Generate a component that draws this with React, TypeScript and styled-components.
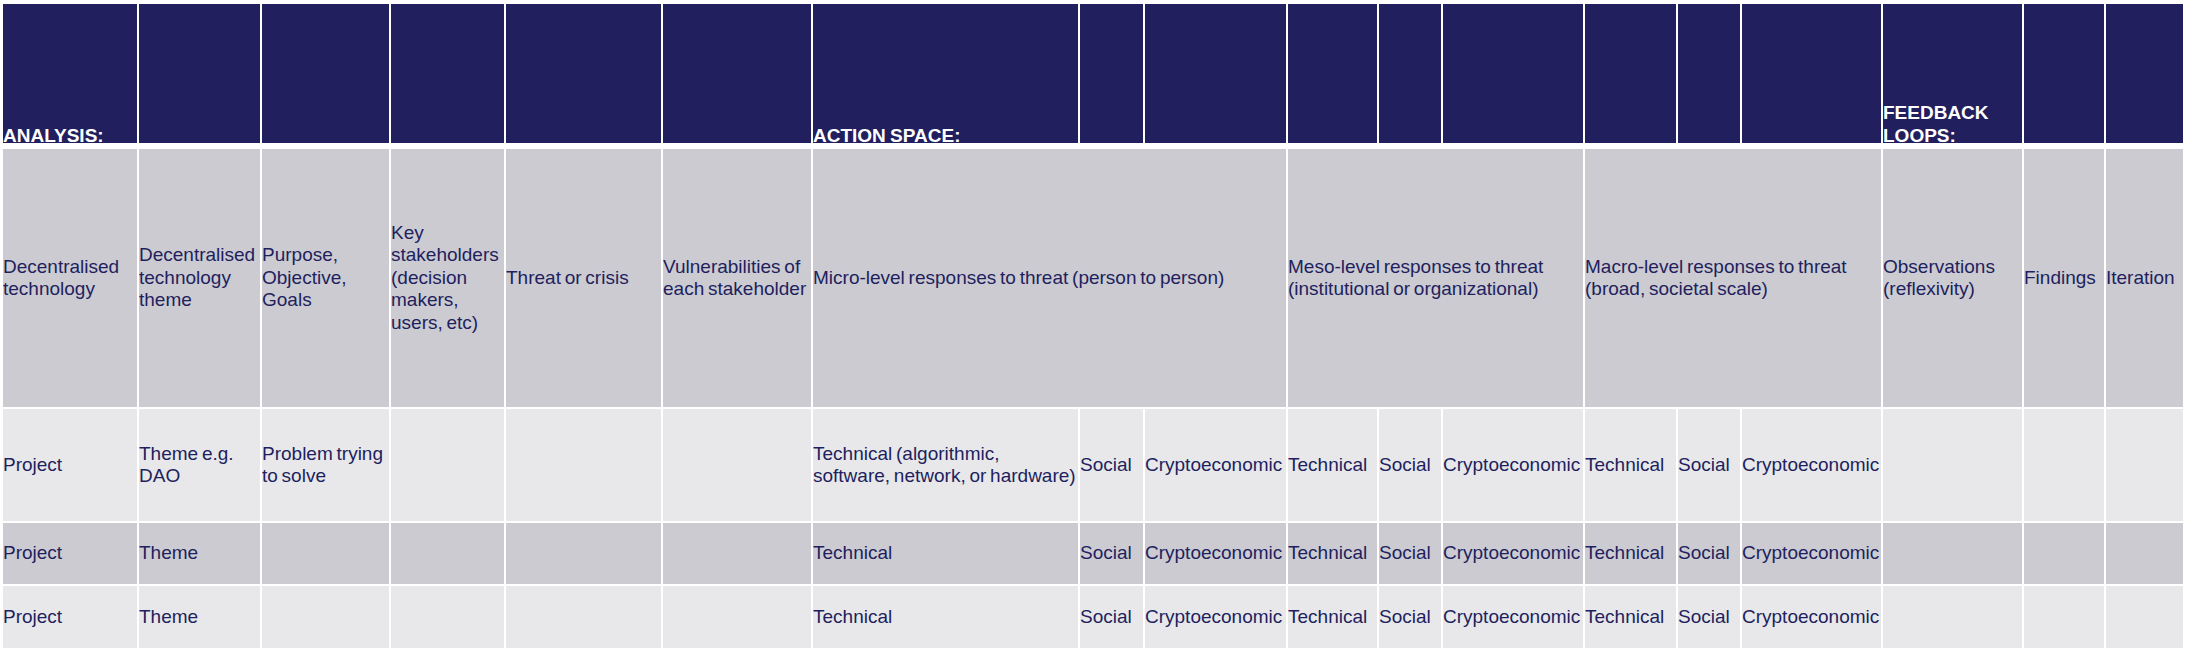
import styled, { createGlobalStyle } from "styled-components";

const NAVY = "#211F5E";
const GRAY = "#CCCBD1";
const LIGHT = "#E8E8EA";

// column widths in px, 2px white rule between them
const COLUMNS = [134, 121, 127, 113, 155, 148, 265, 63, 141, 89, 62, 140, 91, 62, 139, 139, 80, 77];
const template = COLUMNS.map((w) => `${w}px`).join(" ");

const headerLabels: Record<number, string> = {
  0: "ANALYSIS:",
  6: "ACTION SPACE:",
  15: "FEEDBACK LOOPS:",
};

type Cell = { text: string; span?: number };

const topics: Cell[] = [
  { text: "Decentralised technology" },
  { text: "Decentralised technology theme" },
  { text: "Purpose, Objective, Goals" },
  { text: "Key stakeholders (decision makers, users, etc)" },
  { text: "Threat or crisis" },
  { text: "Vulnerabilities of each stakeholder" },
  { text: "Micro-level responses to threat (person to person)", span: 3 },
  { text: "Meso-level responses to threat (institutional or organizational)", span: 3 },
  { text: "Macro-level responses to threat (broad, societal scale)", span: 3 },
  { text: "Observations (reflexivity)" },
  { text: "Findings" },
  { text: "Iteration" },
];

const levels = (first: string) => [first, "Social", "Cryptoeconomic", "Technical", "Social", "Cryptoeconomic", "Technical", "Social", "Cryptoeconomic"];

const rows: { height: number; tone: "gray" | "light"; cells: string[] }[] = [
  {
    height: 112,
    tone: "light",
    cells: [
      "Project",
      "Theme e.g. DAO",
      "Problem trying to solve",
      "",
      "",
      "",
      ...levels("Technical (algorithmic, software, network, or hardware)"),
      "",
      "",
      "",
    ],
  },
  { height: 61, tone: "gray", cells: ["Project", "Theme", "", "", "", "", ...levels("Technical"), "", "", ""] },
  { height: 62, tone: "light", cells: ["Project", "Theme", "", "", "", "", ...levels("Technical"), "", "", ""] },
];

const App = () => {
  return (
    <>
      <GlobalStyle />
      <Page>
        <HeaderRow>
          {COLUMNS.map((_, i) => (
            <HeaderCell key={i}>{headerLabels[i] && <HeaderLabel>{headerLabels[i]}</HeaderLabel>}</HeaderCell>
          ))}
        </HeaderRow>

        <Body>
          {topics.map((c, i) => (
            <BodyCell key={`t${i}`} $tone="gray" $span={c.span}>
              {c.text}
            </BodyCell>
          ))}

          {rows.map((row, r) =>
            row.cells.map((text, i) => (
              <BodyCell key={`r${r}-${i}`} $tone={row.tone}>
                {text}
              </BodyCell>
            ))
          )}
        </Body>
      </Page>
    </>
  );
};

const GlobalStyle = createGlobalStyle`
  html, body {
    margin: 0;
    padding: 0;
    background: #ffffff;
  }

  body {
    font-family: "Liberation Sans", Arial, Helvetica, sans-serif;
  }
`;

const Page = styled.div`
  display: flex;
  flex-direction: column;
  gap: 6px;
  padding: 4px 6px 6px 3px;
  width: max-content;
`;

const HeaderRow = styled.div`
  display: grid;
  grid-template-columns: ${template};
  grid-template-rows: 139px;
  column-gap: 2px;
`;

// labels sit on the bottom edge of the navy band, baseline ~1px above it
const HeaderCell = styled.div`
  background: ${NAVY};
  display: flex;
  align-items: flex-end;
`;

const HeaderLabel = styled.span`
  color: #ffffff;
  font-weight: 700;
  font-size: 19px;
  line-height: 23px;
  margin-bottom: -4px;
  word-spacing: -1px;
`;

const Body = styled.div`
  display: grid;
  grid-template-columns: ${template};
  grid-template-rows: 258px ${rows.map((r) => `${r.height}px`).join(" ")};
  gap: 2px;
`;

const BodyCell = styled.div<{ $tone: "gray" | "light"; $span?: number }>`
  grid-column: span ${(p) => p.$span ?? 1};
  background: ${(p) => (p.$tone === "gray" ? GRAY : LIGHT)};
  color: ${NAVY};
  font-size: 19px;
  line-height: 22.5px;
  word-spacing: -1.5px;
  display: flex;
  align-items: center;
  overflow: hidden;
`;

export default App;
